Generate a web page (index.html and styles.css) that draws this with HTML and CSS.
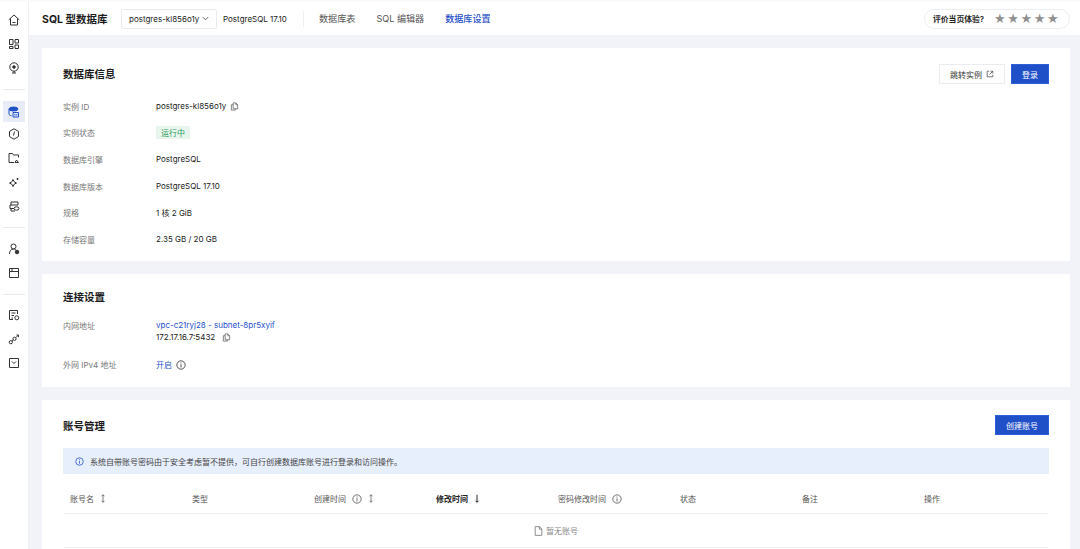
FILE: index.html
```html
<!DOCTYPE html>
<html lang="zh-CN">
<head>
  <meta charset="UTF-8">
  <title>SQL 型数据库</title>
  <link rel="stylesheet" href="styles.css">
</head>
<body>
  <svg class="defs" width="0" height="0">
    <symbol id="copy" viewBox="0 0 10 10"><path d="M3.500 1h3l2 2v4.500h-5zM6.500 1v2h2M3.500 3H1.500v6h4.500V7.500" fill="none" stroke="currentColor"/></symbol>
    <symbol id="info" viewBox="0 0 12 12"><circle cx="6" cy="6" r="5" fill="none" stroke="currentColor"/><path d="M6 5.200V9M6 3v1.200" fill="none" stroke="currentColor"/></symbol>
    <symbol id="sort" viewBox="0 0 8 12"><path d="M4 1v10M2 3l2-2 2 2M2 9l2 2 2-2" fill="none" stroke="currentColor"/></symbol>
  </svg>

  <!-- 左侧导航 -->
  <nav class="sidebar">
    <div class="side-group">
      <a class="side-item"><svg viewBox="0 0 12 12"><path d="M.8 5.800 6 1l5.200 4.800M2.500 4.500V11h7V4.500M4.500 8.500h3"/></svg></a>
      <a class="side-item"><svg viewBox="0 0 12 12"><path d="M1.500 1.500h3.500v5H1.500zM7 1.500h3.500V5H7zM7 7h3.500v3.500H7zM1.500 8.500H5v2H1.500z"/></svg></a>
      <a class="side-item"><svg viewBox="0 0 12 12"><circle cx="6" cy="5" r="4.200"/><circle cx="6" cy="5" r="1.300" class="solid"/><path d="M4 11h4M6 9v2"/></svg></a>
    </div>
    <div class="side-line"></div>
    <div class="side-group">
      <a class="side-item active"><svg viewBox="0 0 12 12"><ellipse cx="5.500" cy="3" rx="4.500" ry="2" class="fill"/><path d="M1 3v5c0 1 1 1.500 2.500 1.800M5 6.500h5.500v4.500H5zM7 8v1.500M8.800 8v1.500"/></svg></a>
      <a class="side-item"><svg viewBox="0 0 12 12"><path d="M6 .8 10.500 3.400v5.200L6 11.200 1.500 8.600V3.400zM6.500 3.500 5.500 7.500"/></svg></a>
      <a class="side-item"><svg viewBox="0 0 12 12"><path d="M10.500 5.500V3H5.500L4.500 1.500h-3.500v9H6M7 10.500l1.500-2.500 2 2.500z"/></svg></a>
      <a class="side-item"><svg viewBox="0 0 12 12"><path d="M5 3.500 6.200 5.800 8.500 7 6.200 8.200 5 10.500 3.800 8.200 1.500 7 3.800 5.800zM9.500 2v2M8.500 3h2"/></svg></a>
      <a class="side-item"><svg viewBox="0 0 12 12"><path d="M3 5V2h7v3H2v3.500h4M3 8.500V11h4"/><ellipse cx="8.500" cy="8.500" rx="2.500" ry="1.700"/></svg></a>
    </div>
    <div class="side-line"></div>
    <div class="side-group user-group">
      <a class="side-item"><svg viewBox="0 0 12 12"><circle cx="5.500" cy="3.500" r="2.500"/><path d="M1.500 11c0-3 1.500-5 4-5 1 0 1.500.3 2.300.8"/><circle cx="9" cy="9" r="1.800" class="solid"/></svg></a>
      <a class="side-item"><svg viewBox="0 0 12 12"><path d="M1.500 1.500h9v9h-9zM1.500 4.500h9M4 1.500v3"/></svg></a>
    </div>
    <div class="side-line"></div>
    <div class="side-group">
      <a class="side-item"><svg viewBox="0 0 12 12"><path d="M9.500 5V1.500h-8v9H5M3.500 4h4M3.500 6.500H6M3.500 9H5"/><circle cx="8.800" cy="8.800" r="2"/></svg></a>
      <a class="side-item"><svg viewBox="0 0 12 12"><circle cx="2.800" cy="9.200" r="1.600"/><circle cx="6.500" cy="5.800" r="1.600"/><path d="M4 8 5.300 7M8 4.500 10.500 2M8.500 2h2v2"/></svg></a>
      <a class="side-item"><svg viewBox="0 0 12 12"><path d="M1.500 1.500h9v9h-9zM4 4.500 6 6.500 8 4.500"/></svg></a>
    </div>
  </nav>

  <div class="page">
    <header class="topbar">
      <h1 class="app-title">SQL 型数据库</h1>
      <div class="instance-select">
        <span>postgres-kl856o1y</span>
        <svg class="chevron" viewBox="0 0 8 8"><path d="M1 2.500 4 5.500 7 2.500"/></svg>
      </div>
      <span class="instance-version">PostgreSQL 17.10</span>
      <div class="tabs">
        <a class="tab">数据库表</a>
        <a class="tab">SQL 编辑器</a>
        <a class="tab current">数据库设置</a>
      </div>
      <div class="rating">
        <b>评价当页体验?</b>
        <span class="stars">★★★★★</span>
      </div>
    </header>

    <main class="content">
      <section class="card info-card">
        <div class="card-head">
          <h2>数据库信息</h2>
          <div class="actions">
            <button class="btn">跳转实例
              <svg class="ext" viewBox="0 0 10 10"><path d="M4 1.500H1.500v7h7V6M5.500 1.500h3v3M8.500 1.500 4.500 5.500"/></svg>
            </button>
            <button class="btn primary">登录</button>
          </div>
        </div>
        <dl class="fields">
          <dt>实例 ID</dt>
          <dd>postgres-kl856o1y <svg class="ico-copy"><use href="#copy"/></svg></dd>
          <dt>实例状态</dt>
          <dd><span class="tag">运行中</span></dd>
          <dt>数据库引擎</dt>
          <dd>PostgreSQL</dd>
          <dt>数据库版本</dt>
          <dd>PostgreSQL 17.10</dd>
          <dt>规格</dt>
          <dd>1 核 2 GiB</dd>
          <dt>存储容量</dt>
          <dd>2.35 GB / 20 GB</dd>
        </dl>
      </section>

      <section class="card conn-card">
        <div class="card-head">
          <h2>连接设置</h2>
        </div>
        <dl class="fields conn">
          <dt>内网地址</dt>
          <dd>
            <a class="link">vpc-c21ryj28 - subnet-8pr5xyif</a>
            <div class="addr">172.17.16.7:5432 <svg class="ico-copy"><use href="#copy"/></svg></div>
          </dd>
          <dt>外网 IPv4 地址</dt>
          <dd><a class="link">开启</a> <svg class="ico-info"><use href="#info"/></svg></dd>
        </dl>
      </section>

      <section class="card account-card">
        <div class="card-head">
          <h2>账号管理</h2>
          <button class="btn primary">创建账号</button>
        </div>
        <div class="alert">
          <svg class="ico-alert"><use href="#info"/></svg>
          系统自带账号密码由于安全考虑暂不提供，可自行创建数据库账号进行登录和访问操作。
        </div>
        <div class="table-head">
          <span>账号名 <svg class="ico-sort"><use href="#sort"/></svg></span>
          <span>类型</span>
          <span>创建时间 <svg class="ico-small"><use href="#info"/></svg> <svg class="ico-sort"><use href="#sort"/></svg></span>
          <span class="sorted">修改时间 <svg class="ico-sort" viewBox="0 0 8 12"><path d="M4 1v10M2 9l2 2 2-2" fill="none" stroke="currentColor" stroke-width="1.300"/></svg></span>
          <span>密码修改时间 <svg class="ico-small"><use href="#info"/></svg></span>
          <span>状态</span>
          <span>备注</span>
          <span>操作</span>
        </div>
        <div class="table-empty">
          <svg class="ico-file" viewBox="0 0 10 12"><path d="M1 .8h5.200L9 3.600v7.600H1zM6 .8v3h3"/></svg>
          暂无账号
        </div>
      </section>
    </main>
  </div>
</body>
</html>
```

FILE: styles.css
```css
* {
  margin: 0;
  padding: 0;
  box-sizing: border-box;
}

html, body {
  width: 1080px;
  height: 549px;
  overflow: hidden;
}

body {
  display: flex;
  padding-top: 2px;
  background: #fafafb;
  color: #222;
  font-family: Inter, "Noto Sans CJK SC", sans-serif;
  font-size: 8px;
}

.defs {
  display: none;
}

/* sidebar */
.sidebar {
  width: 29px;
  flex-shrink: 0;
  padding-top: 6px;
  background: #fff;
  border-right: 1px solid #eef0f4;
}

.side-line {
  height: 1px;
  margin: 9px 3px 8px;
  background: #e9ebef;
}

.user-group {
  padding-top: 1px;
}

.side-item {
  display: flex;
  height: 24px;
  align-items: center;
  justify-content: center;
  margin: 0 3px;
}

.side-item svg {
  width: 12px;
  height: 12px;
  fill: none;
  stroke: #333;
  stroke-width: 1;
}

.side-item svg .solid {
  fill: #333;
}

.side-item.active {
  height: 21px;
  margin-top: 11px;
  background: #e8ecf6;
}

.side-item.active svg {
  stroke: #1f50c8;
}

.side-item.active svg .fill {
  fill: #1f50c8;
}

/* page */
.page {
  flex: 1;
  min-width: 0;
  background: #f1f3f8;
}

.topbar {
  display: flex;
  height: 33px;
  align-items: center;
  padding: 0 10px 0 13px;
  background: #fff;
}

.app-title {
  width: 79px;
  font-size: 10.5px;
  font-weight: 700;
  color: #1c1c1c;
}

.instance-select {
  display: flex;
  width: 96px;
  height: 20px;
  align-items: center;
  justify-content: space-between;
  padding: 0 7px;
  border: 1px solid #e9ebef;
  border-radius: 2px;
  white-space: nowrap;
}

.chevron {
  width: 7px;
  height: 7px;
  fill: none;
  stroke: #444;
}

.instance-version {
  width: 80px;
  margin-left: 6px;
}

.tabs {
  display: flex;
  gap: 21px;
  padding-left: 15px;
  border-left: 1px solid #eef0f4;
  line-height: 16px;
}

.tab {
  font-size: 9.1px;
  color: #555;
}

.tab.current {
  color: #1f50c8;
  font-weight: 500;
}

.rating {
  display: flex;
  width: 146px;
  height: 20px;
  align-items: center;
  margin-left: auto;
  padding-left: 8px;
  border: 1px solid #eceef2;
  border-radius: 10px;
  font-size: 7.8px;
}

.rating b {
  width: 61px;
  font-weight: 600;
}

.stars {
  font-size: 13px;
  letter-spacing: 1.6px;
  color: #8f8f8f;
  font-family: "DejaVu Sans", sans-serif;
}

/* main */
.content {
  padding: 13px 10px 0 13px;
}

.card {
  margin-bottom: 13px;
  padding: 16px 21px 0;
  background: #fff;
}

.info-card {
  height: 213px;
}

.conn-card {
  height: 113px;
  padding-top: 12px;
}

.account-card {
  height: 160px;
  margin-bottom: 0;
  padding-top: 15px;
}

.card-head {
  display: flex;
  height: 20px;
  align-items: center;
  justify-content: space-between;
}

.info-card .card-head h2 {
  margin-top: -1px;
}

.card-head h2 {
  font-size: 10.5px;
  font-weight: 600;
  color: #1c1c1c;
}

.actions {
  display: flex;
  gap: 6px;
}

.btn {
  display: flex;
  height: 20px;
  align-items: center;
  gap: 4px;
  padding: 0 10px;
  border: 1px solid #e9ebef;
  background: #fff;
  color: #333;
  font: inherit;
}

.btn.primary {
  background: #1f50c8;
  border-color: #2e5fd8;
  color: #fff;
}

.ext {
  width: 8px;
  height: 8px;
  fill: none;
  stroke: #555;
}

.fields {
  display: grid;
  grid-template-columns: 93px 1fr;
  grid-auto-rows: 26.6px;
  align-items: center;
  margin-top: 9px;
}

dt {
  color: #777;
}

dd {
  display: flex;
  align-items: center;
  gap: 3px;
}

.ico-copy {
  width: 9px;
  height: 9px;
  margin-left: 1px;
  color: #777;
}

.tag {
  padding: 1px 5px;
  background: #e9f6ee;
  color: #2b9a5b;
}

.fields.conn {
  grid-auto-rows: auto;
  row-gap: 17px;
  margin-top: 14px;
}

.conn dt {
  align-self: start;
}

.conn dd {
  display: block;
}

.conn dd:last-child {
  display: flex;
  gap: 4px;
}

.link {
  color: #1f50c8;
}

.addr {
  display: flex;
  align-items: center;
  gap: 6px;
  margin-top: 2px;
}

.ico-info {
  width: 10px;
  height: 10px;
  color: #333;
}

.alert {
  display: flex;
  height: 26px;
  align-items: center;
  gap: 6px;
  margin-top: 13px;
  padding-left: 12px;
  background: #e7eefc;
  color: #444;
}

.ico-alert {
  width: 9px;
  height: 9px;
  color: #1f50c8;
}

/* table */
.table-head {
  display: grid;
  grid-template-columns: repeat(8, 122px);
  height: 40px;
  align-items: center;
  padding: 10px 0 0 7px;
  border-bottom: 1px solid #f1f2f5;
  color: #555;
}

.table-head span {
  display: flex;
  align-items: center;
  gap: 6px;
}

.table-head .sorted {
  color: #222;
  font-weight: 600;
}

.ico-sort {
  width: 6px;
  height: 9px;
}

.ico-small {
  width: 10px;
  height: 10px;
}

.table-empty {
  display: flex;
  height: 34px;
  align-items: center;
  justify-content: center;
  gap: 3px;
  border-bottom: 1px solid #f1f2f5;
  color: #888;
}

.ico-file {
  width: 9px;
  height: 10px;
  fill: none;
  stroke: #777;
}
```
